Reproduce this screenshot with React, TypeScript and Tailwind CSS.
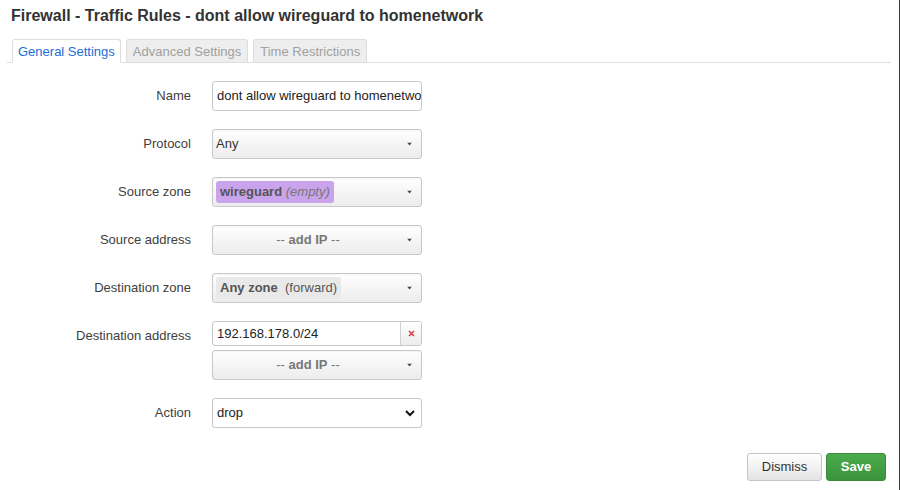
import React from "react";

const font = { fontFamily: '"Liberation Sans", Arial, sans-serif' };

function Caret() {
  return (
    <svg width="5" height="3" viewBox="0 0 5 3" className="absolute right-[9px] top-1/2 -translate-y-1/2">
      <path d="M0 0 L5 0 L2.5 3 Z" fill="#444" />
    </svg>
  );
}

function Row({ label, children }: { label: string; children: React.ReactNode }) {
  return (
    <div className="flex items-start">
      <div className="w-[191px] shrink-0 text-right text-[13px] text-[#404040] leading-[30px]">{label}</div>
      <div className="ml-[21px] w-[210px]">{children}</div>
    </div>
  );
}

const selBox =
  "relative h-[30px] w-[210px] rounded-[3px] border border-[#c8c8c8] bg-gradient-to-b from-white to-[#ececec] shadow-[inset_0_1px_1px_rgba(0,0,0,0.04)]";

export default function App() {
  return (
    <div style={font} className="w-[900px] h-[490px] bg-white border-r border-[#3a3a3a] flex flex-col overflow-hidden">
      <div className="pl-[11px] pt-[6px] text-[16px] font-bold text-[#333] leading-[20px]">
        Firewall - Traffic Rules - dont allow wireguard to homenetwork
      </div>
      <div className="ml-[7px] mr-[8px] mt-[13px] flex items-end gap-[5px] border-b border-[#ddd] pl-[5px] h-[24px]">
        <div className="h-[24px] -mb-px px-[5px] rounded-t-[3px] border border-[#ddd] border-b-white bg-white text-[13px] leading-[23px] text-[#1b6fd1]">
          General Settings
        </div>
        <div className="h-[23px] px-[6px] rounded-t-[3px] border border-b-0 border-[#ddd] bg-[#eee] text-[13px] leading-[23px] text-[#a0a0a0]">
          Advanced Settings
        </div>
        <div className="h-[23px] px-[6px] rounded-t-[3px] border border-b-0 border-[#ddd] bg-[#eee] text-[13px] leading-[23px] text-[#a0a0a0]">
          Time Restrictions
        </div>
      </div>

      <div className="mt-[18px] flex flex-col gap-[18px]">
        <Row label="Name">
          <div className="h-[30px] w-[210px] rounded-[3px] border border-[#c8c8c8] bg-white pl-[4px] text-[13px] leading-[28px] text-[#222] overflow-hidden whitespace-nowrap">
            dont allow wireguard to homenetwork
          </div>
        </Row>
        <Row label="Protocol">
          <div className={selBox}>
            <div className="pl-[3px] text-[13px] leading-[28px] text-[#333]">Any</div>
            <Caret />
          </div>
        </Row>
        <Row label="Source zone">
          <div className={selBox}>
            <div className="absolute left-[3px] top-[3px] h-[22px] rounded-[3px] bg-[#c9a3eb] px-[4px] text-[13px] leading-[22px] text-[#555]">
              <span className="font-bold">wireguard</span> <span className="italic text-[#777]">(empty)</span>
            </div>
            <Caret />
          </div>
        </Row>
        <Row label="Source address">
          <div className={selBox}>
            <div className="text-center text-[13px] leading-[28px] text-[#777] pr-[18px]">
              -- <span className="font-bold">add IP</span> --
            </div>
            <Caret />
          </div>
        </Row>
        <Row label="Destination zone">
          <div className={selBox}>
            <div className="absolute left-[3px] top-[3px] h-[22px] rounded-[3px] bg-[#e9e9e9] px-[4px] text-[13px] leading-[22px] text-[#555]">
              <span className="font-bold">Any zone</span>&nbsp; <span>(forward)</span>
            </div>
            <Caret />
          </div>
        </Row>
        <Row label="Destination address">
          <div className="flex flex-col gap-[4px]">
            <div className="flex h-[25px] w-[210px] rounded-[3px] border border-[#c8c8c8] bg-white overflow-hidden">
              <div className="flex-1 pl-[4px] text-[13px] leading-[23px] text-[#222]">192.168.178.0/24</div>
              <div className="w-[21px] border-l border-[#d0d0d0] bg-gradient-to-b from-white to-[#ececec] flex items-center justify-center">
                <svg width="7" height="7" viewBox="0 0 7 7">
                  <path d="M1 1 L6 6 M6 1 L1 6" stroke="#d9424a" strokeWidth="1.6" />
                </svg>
              </div>
            </div>
            <div className={selBox}>
              <div className="text-center text-[13px] leading-[28px] text-[#777] pr-[18px]">
                -- <span className="font-bold">add IP</span> --
              </div>
              <Caret />
            </div>
          </div>
        </Row>
        <Row label="Action">
          <div className="relative h-[30px] w-[210px] rounded-[3px] border border-[#c8c8c8] bg-white">
            <div className="pl-[4px] text-[13px] leading-[28px] text-[#222]">drop</div>
            <svg width="10" height="7" viewBox="0 0 10 7" className="absolute right-[6px] top-[11px]">
              <path d="M1 1 L5 5 L9 1" stroke="#111" strokeWidth="2" fill="none" />
            </svg>
          </div>
        </Row>
      </div>

      <div className="mt-auto mb-[9px] mr-[13px] flex justify-end gap-[4px]">
        <div className="h-[28px] w-[75px] rounded-[3px] border border-[#c4c4c4] bg-gradient-to-b from-white to-[#e4e4e4] text-center text-[13px] leading-[26px] text-[#333]">
          Dismiss
        </div>
        <div className="h-[28px] w-[60px] rounded-[3px] border border-[#3b8d3b] bg-gradient-to-b from-[#4bab4b] to-[#3b943b] text-center text-[13px] font-bold leading-[26px] text-white">
          Save
        </div>
      </div>
    </div>
  );
}
